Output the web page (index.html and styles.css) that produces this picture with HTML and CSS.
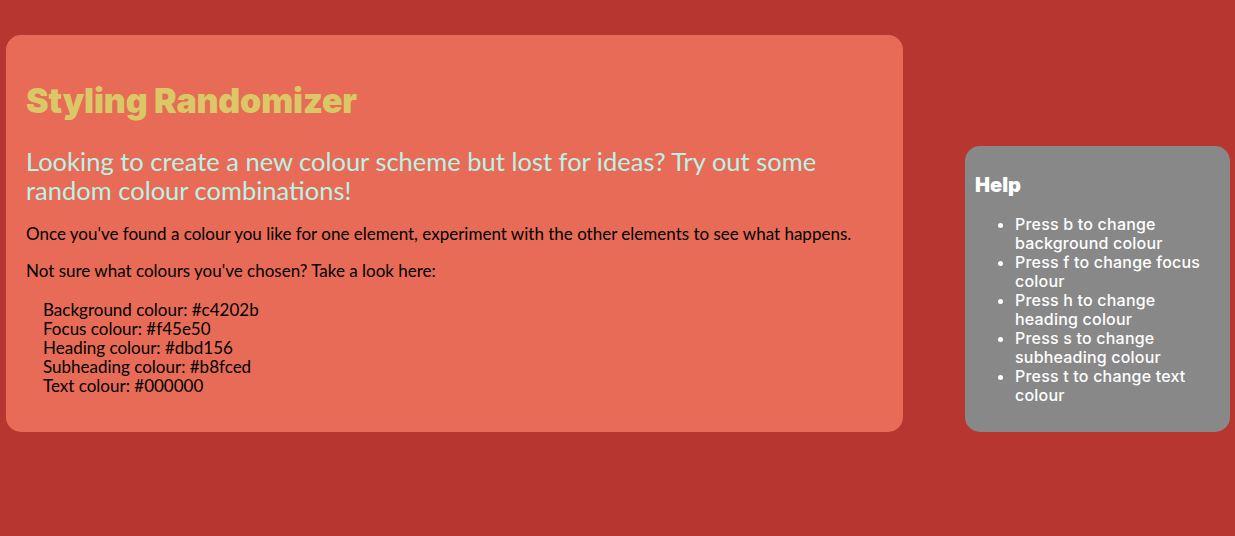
FILE: index.html
```html
<!DOCTYPE html>
<html lang="en">
<head>
<meta charset="utf-8">
<title>Styling Randomizer</title>
<link rel="stylesheet" href="styles.css">
</head>
<body>
<div class="page">
  <main class="card">
    <h1 class="title">Styling Randomizer</h1>
    <h2 class="subtitle">Looking to create a new colour scheme but lost for ideas? Try out some random colour combinations!</h2>
    <p class="text">Once you've found a colour you like for one element, experiment with the other elements to see what happens.</p>
    <p class="text">Not sure what colours you've chosen? Take a look here:</p>
    <ul class="colours">
      <li>Background colour: #c4202b</li>
      <li>Focus colour: #f45e50</li>
      <li>Heading colour: #dbd156</li>
      <li>Subheading colour: #b8fced</li>
      <li>Text colour: #000000</li>
    </ul>
  </main>
  <aside class="help">
    <h3 class="help-title">Help</h3>
    <ul class="help-list">
      <li>Press b to change background colour</li>
      <li>Press f to change focus colour</li>
      <li>Press h to change heading colour</li>
      <li>Press s to change subheading colour</li>
      <li>Press t to change text colour</li>
    </ul>
  </aside>
</div>
</body>
</html>
```

FILE: styles.css
```css
html, body {
  margin: 0;
  padding: 0;
}
body {
  background: #b83630;
  width: 1235px;
  height: 536px;
  overflow: hidden;
}
.page {
  display: flex;
  align-items: flex-end;
  justify-content: space-between;
  padding: 35px 5px 0 6px;
}
.card {
  width: 897px;
  box-sizing: border-box;
  background: #e86b57;
  border-radius: 15px;
  padding: 42px 20px 37px;
  font-family: "Lato", "Open Sans", sans-serif;
  color: #000;
}
.title {
  margin: 0 0 22px;
  font-family: "Inter", sans-serif;
  font-weight: 900;
  font-size: 34px;
  line-height: 48px;
  color: #dac866;
  letter-spacing: -0.2px;
}
.subtitle {
  margin: 0 0 19px;
  font-family: "Lato", sans-serif;
  font-weight: 400;
  font-size: 25.5px;
  line-height: 29px;
  color: #b8f3e6;
}
.text {
  margin: 0 0 17px;
  font-size: 17px;
  line-height: 20px;
}
.colours {
  list-style: none;
  margin: 0;
  padding: 2px 0 0 17px;
  font-size: 17px;
  line-height: 19px;
}
.help {
  width: 265px;
  box-sizing: border-box;
  background: #888888;
  border-radius: 15px;
  padding: 28px 10px 27px;
  color: #fff;
  font-family: "Inter", sans-serif;
}
.help-title {
  margin: 0 0 19px;
  font-weight: 900;
  font-size: 20px;
  line-height: 22px;
}
.help-list {
  margin: 0;
  padding-left: 40px;
  font-weight: 500;
  font-size: 16px;
  line-height: 19px;
  letter-spacing: 0.2px;
}
```
